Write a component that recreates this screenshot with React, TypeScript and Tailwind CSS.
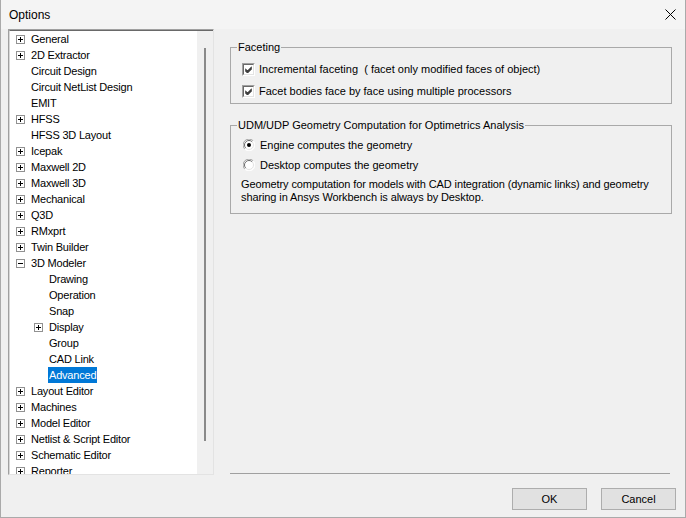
import React from 'react';

type Node = { label: string; level: 0 | 1; expander?: 'plus' | 'minus'; selected?: boolean };

const tree: Node[] = [
    { label: 'General', level: 0, expander: 'plus' },
    { label: '2D Extractor', level: 0, expander: 'plus' },
    { label: 'Circuit Design', level: 0 },
    { label: 'Circuit NetList Design', level: 0 },
    { label: 'EMIT', level: 0 },
    { label: 'HFSS', level: 0, expander: 'plus' },
    { label: 'HFSS 3D Layout', level: 0 },
    { label: 'Icepak', level: 0, expander: 'plus' },
    { label: 'Maxwell 2D', level: 0, expander: 'plus' },
    { label: 'Maxwell 3D', level: 0, expander: 'plus' },
    { label: 'Mechanical', level: 0, expander: 'plus' },
    { label: 'Q3D', level: 0, expander: 'plus' },
    { label: 'RMxprt', level: 0, expander: 'plus' },
    { label: 'Twin Builder', level: 0, expander: 'plus' },
    { label: '3D Modeler', level: 0, expander: 'minus' },
    { label: 'Drawing', level: 1 },
    { label: 'Operation', level: 1 },
    { label: 'Snap', level: 1 },
    { label: 'Display', level: 1, expander: 'plus' },
    { label: 'Group', level: 1 },
    { label: 'CAD Link', level: 1 },
    { label: 'Advanced', level: 1, selected: true },
    { label: 'Layout Editor', level: 0, expander: 'plus' },
    { label: 'Machines', level: 0, expander: 'plus' },
    { label: 'Model Editor', level: 0, expander: 'plus' },
    { label: 'Netlist & Script Editor', level: 0, expander: 'plus' },
    { label: 'Schematic Editor', level: 0, expander: 'plus' },
    { label: 'Reporter', level: 0, expander: 'plus' },
];

const Expander = ({ kind }: { kind: 'plus' | 'minus' }) => (
    <svg width="9" height="9" viewBox="0 0 9 9" className="shrink-0">
        <rect x="0.5" y="0.5" width="8" height="8" fill="#fff" stroke="#919191" />
        <line x1="2" y1="4.5" x2="7" y2="4.5" stroke="#000" />
        {kind === 'plus' && <line x1="4.5" y1="2" x2="4.5" y2="7" stroke="#000" />}
    </svg>
);

const TreeRow = ({ node }: { node: Node }) => {
    const indent = node.level === 0 ? 'pl-[6px]' : 'pl-[24px]';
    return (
        <div className={`flex h-[16px] items-center ${indent}`}>
            <div className="flex w-[14px] shrink-0 items-center">
                {node.expander && <Expander kind={node.expander} />}
            </div>
            <span
                className={`h-[16px] whitespace-nowrap px-[1px] leading-[16px] ${
                    node.selected ? 'bg-[#0078d7] text-white' : 'text-black'
                }`}
            >
                {node.label}
            </span>
        </div>
    );
};

const Checkbox = () => (
    <span className="flex h-[13px] w-[13px] shrink-0 border border-b-white border-l-[#a0a0a0] border-r-white border-t-[#a0a0a0]">
        <span className="flex flex-1 items-center justify-center border border-b-[#e3e3e3] border-l-[#696969] border-r-[#e3e3e3] border-t-[#696969] bg-white">
            <svg width="7" height="7" viewBox="0 0 7 7">
                <path d="M0 2.5 L2.5 5 L7 0.5 M0 3.5 L2.5 6 L7 1.5 M0 4.5 L2.5 7 L7 2.5" stroke="#000" strokeWidth="1" fill="none" />
            </svg>
        </span>
    </span>
);

const Radio = ({ checked }: { checked?: boolean }) => (
    <svg width="12" height="12" viewBox="0 0 12 12" className="shrink-0">
        <circle cx="6" cy="6" r="5.5" fill="#fff" />
        <path d="M10.2 1.8 A5.5 5.5 0 0 0 1.8 10.2" stroke="#a0a0a0" fill="none" />
        <path d="M9.2 2.8 A4.5 4.5 0 0 0 2.8 9.2" stroke="#696969" fill="none" />
        <path d="M1.8 10.2 A5.5 5.5 0 0 0 10.2 1.8" stroke="#ffffff" fill="none" />
        <path d="M2.8 9.2 A4.5 4.5 0 0 0 9.2 2.8" stroke="#e3e3e3" fill="none" />
        {checked && <circle cx="6" cy="6" r="2" fill="#000" />}
    </svg>
);

const GroupBox = ({ title, className, children }: { title: string; className?: string; children: React.ReactNode }) => (
    <fieldset className={`border border-[#a9a9a9] ${className ?? ''}`}>
        <legend className="ml-[6px] px-[1px] leading-[13px]">{title}</legend>
        {children}
    </fieldset>
);

const WinButton = ({ label }: { label: string }) => (
    <button className="h-[22px] w-[75px] border border-[#adadad] bg-[#e1e1e1] text-[11px] text-black">
        {label}
    </button>
);

export default function App() {
    return (
        <div
            className="flex h-[518px] w-[686px] flex-col border-x border-b border-[#aaaaaa] bg-[#f0f0f0] text-[11px] text-black"
            style={{ fontFamily: '"Liberation Sans", Arial, sans-serif' }}
        >
            {/* title bar */}
            <div className="flex h-[29px] shrink-0 items-center justify-between bg-[#f4f4f4] pl-[8px] pr-[8px]">
                <span className="text-[12px]">Options</span>
                <svg width="11" height="11" viewBox="0 0 11 11" className="mr-[1px]">
                    <path d="M0.5 0.5 L10.5 10.5 M10.5 0.5 L0.5 10.5" stroke="#000" strokeWidth="1" />
                </svg>
            </div>

            <div className="flex h-[446px] shrink-0 pl-[7px]">
                {/* tree */}
                <div className="flex h-[446px] w-[206px] shrink-0 border border-b-[#e3e3e3] border-l-[#a0a0a0] border-r-[#e3e3e3] border-t-[#a0a0a0]">
                    <div className="flex flex-1 overflow-hidden border-l border-t border-l-[#d8d8d8] border-t-[#696969]">
                        <div className="flex-1 overflow-hidden bg-white text-[11px] tracking-[-0.2px]">
                            {tree.map((n) => (
                                <TreeRow key={n.label} node={n} />
                            ))}
                        </div>
                        <div className="flex w-[16px] shrink-0 justify-center bg-[#f0f0f0] pt-[17px]">
                            <div className="h-[393px] w-[2px] bg-[#8a8a8a]" />
                        </div>
                    </div>
                </div>

                {/* settings */}
                <div className="ml-[16px] flex w-[442px] flex-col pt-[12px]">
                    <GroupBox title="Faceting" className="pb-[1px]">
                        <div className="mt-[4px] flex h-[22px] items-center gap-[4px] pl-[11px]">
                            <Checkbox />
                            <span>Incremental faceting&nbsp; ( facet only modified faces of object)</span>
                        </div>
                        <div className="flex h-[22px] items-center gap-[4px] pl-[11px]">
                            <Checkbox />
                            <span>Facet bodies face by face using multiple processors</span>
                        </div>
                    </GroupBox>

                    <GroupBox title="UDM/UDP Geometry Computation for Optimetrics Analysis" className="mt-[15px] pb-[9px]">
                        <div className="mt-[3px] flex h-[20px] items-center gap-[5px] pl-[12px]">
                            <Radio checked />
                            <span>Engine computes the geometry</span>
                        </div>
                        <div className="flex h-[20px] items-center gap-[5px] pl-[12px]">
                            <Radio />
                            <span>Desktop computes the geometry</span>
                        </div>
                        <p className="mt-[3px] pl-[10px] leading-[13px] tracking-[-0.1px]">
                            Geometry computation for models with CAD integration (dynamic links) and geometry
                            <br />
                            sharing in Ansys Workbench is always by Desktop.
                        </p>
                    </GroupBox>

                    <div className="flex-1" />
                    <div className="mb-[1px] h-[1px] w-[440px] bg-[#a0a0a0]" />
                </div>
            </div>

            <div className="flex justify-end gap-[14px] pr-[9px] pt-[13px]">
                <WinButton label="OK" />
                <WinButton label="Cancel" />
            </div>
        </div>
    );
}
